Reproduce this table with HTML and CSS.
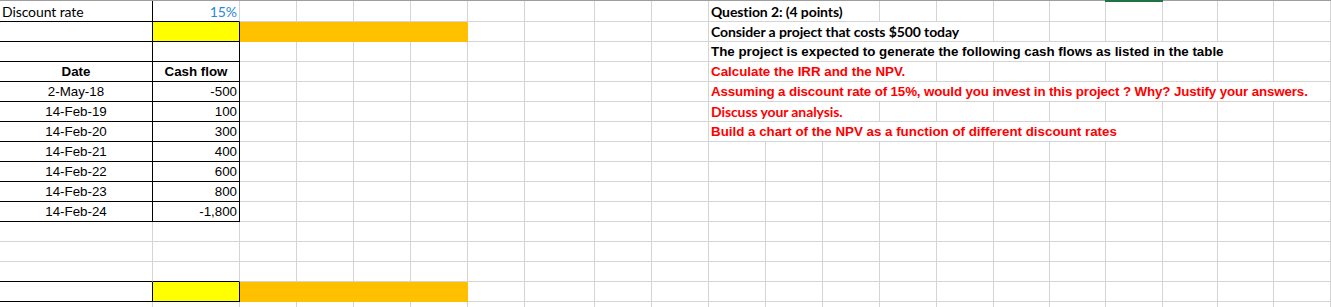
FILE: index.html
```html
<!DOCTYPE html>
<html lang="en">
<head>
<meta charset="utf-8">
<title>Discount rate - NPV</title>
<link rel="stylesheet" href="styles.css">
</head>
<body>
<div class="colhead"><div class="sel"></div></div>
<div class="sheet">
  <!-- row 1 -->
  <div class="row first">
    <div class="c cal kr kb">Discount rate</div>
    <div class="c cal num blue kb">15%</div>
    <div class="c"></div><div class="c"></div><div class="c"></div><div class="c"></div><div class="c"></div><div class="c"></div><div class="c"></div><div class="c"></div>
    <div class="c cal b s3">Question 2: (4 points)</div>
    <div class="c"></div><div class="c"></div><div class="c"></div><div class="c"></div><div class="c"></div><div class="c"></div><div class="c"></div><div class="c"></div>
  </div>
  <!-- row 2 -->
  <div class="row">
    <div class="c kr kb"></div>
    <div class="c yel kr kb"></div>
    <div class="c org s4"></div>
    <div class="c"></div><div class="c"></div><div class="c"></div><div class="c"></div>
    <div class="c cal b s5">Consider a project that costs $500 today</div>
    <div class="c"></div><div class="c"></div><div class="c"></div><div class="c"></div><div class="c"></div><div class="c"></div>
  </div>
  <!-- row 3 -->
  <div class="row">
    <div class="c kr kb"></div>
    <div class="c kr kb"></div>
    <div class="c"></div><div class="c"></div><div class="c"></div><div class="c"></div><div class="c"></div><div class="c"></div><div class="c"></div><div class="c"></div>
    <div class="c b s10">The project is expected to generate the following cash flows as listed in the table</div>
    <div class="c"></div>
  </div>
  <!-- row 4 -->
  <div class="row">
    <div class="c b ctr kr kb">Date</div>
    <div class="c b ctr kr kb">Cash flow</div>
    <div class="c"></div><div class="c"></div><div class="c"></div><div class="c"></div><div class="c"></div><div class="c"></div><div class="c"></div><div class="c"></div>
    <div class="c b red s4">Calculate the IRR and the NPV.</div>
    <div class="c"></div><div class="c"></div><div class="c"></div><div class="c"></div><div class="c"></div><div class="c"></div><div class="c"></div>
  </div>
  <!-- row 5 -->
  <div class="row">
    <div class="c ctr kr kb">2-May-18</div>
    <div class="c num kr kb">-500</div>
    <div class="c"></div><div class="c"></div><div class="c"></div><div class="c"></div><div class="c"></div><div class="c"></div><div class="c"></div><div class="c"></div>
    <div class="c b red tight s11">Assuming a discount rate of 15%, would you invest in this project ? Why? Justify your answers.</div>
  </div>
  <!-- row 6 -->
  <div class="row">
    <div class="c ctr kr kb">14-Feb-19</div>
    <div class="c num kr kb">100</div>
    <div class="c"></div><div class="c"></div><div class="c"></div><div class="c"></div><div class="c"></div><div class="c"></div><div class="c"></div><div class="c"></div>
    <div class="c cal b red s3">Discuss your analysis.</div>
    <div class="c"></div><div class="c"></div><div class="c"></div><div class="c"></div><div class="c"></div><div class="c"></div><div class="c"></div><div class="c"></div>
  </div>
  <!-- row 7 -->
  <div class="row">
    <div class="c ctr kr kb">14-Feb-20</div>
    <div class="c num kr kb">300</div>
    <div class="c"></div><div class="c"></div><div class="c"></div><div class="c"></div><div class="c"></div><div class="c"></div><div class="c"></div><div class="c"></div>
    <div class="c b red s8">Build a chart of the NPV as a function of different discount rates</div>
    <div class="c"></div><div class="c"></div><div class="c"></div>
  </div>
  <!-- row 8 -->
  <div class="row">
    <div class="c ctr kr kb">14-Feb-21</div>
    <div class="c num kr kb">400</div>
    <div class="c"></div><div class="c"></div><div class="c"></div><div class="c"></div><div class="c"></div><div class="c"></div><div class="c"></div><div class="c"></div><div class="c"></div><div class="c"></div>
    <div class="c"></div><div class="c"></div><div class="c"></div><div class="c"></div><div class="c"></div><div class="c"></div><div class="c"></div><div class="c"></div><div class="c"></div>
  </div>
  <!-- row 9 -->
  <div class="row">
    <div class="c ctr kr kb">14-Feb-22</div>
    <div class="c num kr kb">600</div>
    <div class="c"></div><div class="c"></div><div class="c"></div><div class="c"></div><div class="c"></div><div class="c"></div><div class="c"></div><div class="c"></div><div class="c"></div><div class="c"></div>
    <div class="c"></div><div class="c"></div><div class="c"></div><div class="c"></div><div class="c"></div><div class="c"></div><div class="c"></div><div class="c"></div><div class="c"></div>
  </div>
  <!-- row 10 -->
  <div class="row">
    <div class="c ctr kr kb">14-Feb-23</div>
    <div class="c num kr kb">800</div>
    <div class="c"></div><div class="c"></div><div class="c"></div><div class="c"></div><div class="c"></div><div class="c"></div><div class="c"></div><div class="c"></div><div class="c"></div><div class="c"></div>
    <div class="c"></div><div class="c"></div><div class="c"></div><div class="c"></div><div class="c"></div><div class="c"></div><div class="c"></div><div class="c"></div><div class="c"></div>
  </div>
  <!-- row 11 -->
  <div class="row">
    <div class="c ctr kr kb">14-Feb-24</div>
    <div class="c num kr kb">-1,800</div>
    <div class="c"></div><div class="c"></div><div class="c"></div><div class="c"></div><div class="c"></div><div class="c"></div><div class="c"></div><div class="c"></div><div class="c"></div><div class="c"></div>
    <div class="c"></div><div class="c"></div><div class="c"></div><div class="c"></div><div class="c"></div><div class="c"></div><div class="c"></div><div class="c"></div><div class="c"></div>
  </div>
  <!-- row 12 -->
  <div class="row">
    <div class="c"></div><div class="c"></div><div class="c"></div><div class="c"></div><div class="c"></div><div class="c"></div><div class="c"></div><div class="c"></div><div class="c"></div><div class="c"></div><div class="c"></div>
    <div class="c"></div><div class="c"></div><div class="c"></div><div class="c"></div><div class="c"></div><div class="c"></div><div class="c"></div><div class="c"></div><div class="c"></div><div class="c"></div>
  </div>
  <!-- row 13 -->
  <div class="row">
    <div class="c"></div><div class="c"></div><div class="c"></div><div class="c"></div><div class="c"></div><div class="c"></div><div class="c"></div><div class="c"></div><div class="c"></div><div class="c"></div><div class="c"></div>
    <div class="c"></div><div class="c"></div><div class="c"></div><div class="c"></div><div class="c"></div><div class="c"></div><div class="c"></div><div class="c"></div><div class="c"></div><div class="c"></div>
  </div>
  <!-- row 14 -->
  <div class="row">
    <div class="c kb"></div><div class="c kb"></div><div class="c"></div><div class="c"></div><div class="c"></div><div class="c"></div><div class="c"></div><div class="c"></div><div class="c"></div><div class="c"></div><div class="c"></div>
    <div class="c"></div><div class="c"></div><div class="c"></div><div class="c"></div><div class="c"></div><div class="c"></div><div class="c"></div><div class="c"></div><div class="c"></div><div class="c"></div>
  </div>
  <!-- row 15 -->
  <div class="row">
    <div class="c kr kb"></div>
    <div class="c yel kr kb"></div>
    <div class="c org s4"></div>
    <div class="c"></div><div class="c"></div><div class="c"></div><div class="c"></div><div class="c"></div>
    <div class="c"></div><div class="c"></div><div class="c"></div><div class="c"></div><div class="c"></div>
    <div class="c"></div><div class="c"></div><div class="c"></div><div class="c"></div><div class="c"></div>
  </div>
  <!-- row 16 -->
  <div class="row">
    <div class="c"></div><div class="c"></div><div class="c"></div><div class="c"></div><div class="c"></div><div class="c"></div><div class="c"></div><div class="c"></div><div class="c"></div><div class="c"></div><div class="c"></div>
    <div class="c"></div><div class="c"></div><div class="c"></div><div class="c"></div><div class="c"></div><div class="c"></div><div class="c"></div><div class="c"></div><div class="c"></div><div class="c"></div>
  </div>
</div>
</body>
</html>
```

FILE: styles.css
```css
html, body {
  margin: 0;
  padding: 0;
  background: #ffffff;
  overflow: hidden;
}

.colhead {
  position: relative;
  height: 1px;
  background: #9e9e9e;
}

.colhead .sel {
  position: absolute;
  left: 1105px;
  top: 0;
  width: 58px;
  height: 2px;
  background: #217346;
}

.sheet {
  display: flex;
  flex-direction: column;
}

.row {
  display: grid;
  grid-template-columns: 153px 87px 57px 57px 57px 57px 57px 70px 57px 57px 57px 57px 57px 57px 57px 56px 56px 57px 55px 56px 57px;
  height: 20px;
}

.row.first {
  height: 21px;
}

.c {
  box-sizing: border-box;
  border-right: 1px solid #d4d4d4;
  border-bottom: 1px solid #d4d4d4;
  padding: 1px 2px 0 2px;
  line-height: 18px;
  font-family: "Liberation Sans", Arial, sans-serif;
  font-size: 13.33px;
  color: #000000;
  white-space: nowrap;
  overflow: visible;
  min-width: 0;
}

.row.first .c {
  padding-top: 2px;
}

.cal {
  font-family: Lato, "Liberation Sans", sans-serif;
  font-size: 14px;
  letter-spacing: -0.1px;
}

.tight { letter-spacing: -0.12px; }

.b { font-weight: bold; }
.ctr { text-align: center; }
.num { text-align: right; }
.red { color: #ff0000; }
.blue { color: #2a88da; }

.kr { border-right-color: #000000; }
.kb { border-bottom-color: #000000; }

.yel { background: #ffff00; }
.org {
  background: #ffc000;
  border-right-color: #ffc000;
  border-bottom-color: #ffc000;
}

.s3 { grid-column: span 3; }
.s4 { grid-column: span 4; }
.s5 { grid-column: span 5; }
.s8 { grid-column: span 8; }
.s10 { grid-column: span 10; }
.s11 { grid-column: span 11; }
```
